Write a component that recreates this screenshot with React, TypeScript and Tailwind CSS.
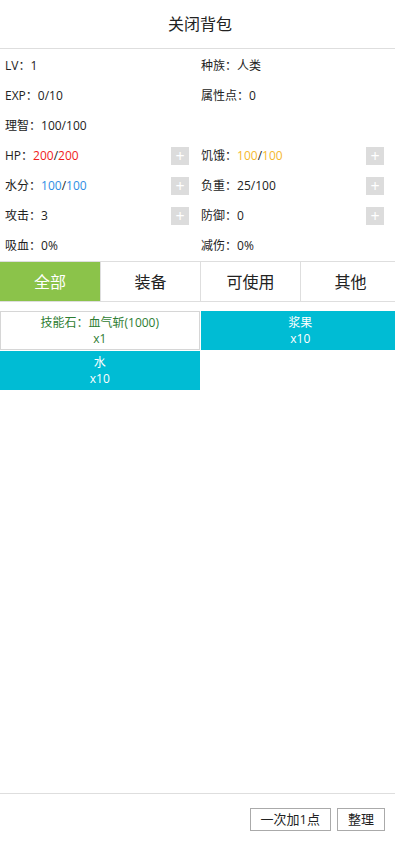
import React from "react";

type Stat = {
  label: string;
  value: React.ReactNode;
  plus?: boolean;
};

const leftStats: Stat[] = [
  { label: "LV", value: "1" },
  { label: "EXP", value: "0/10" },
  { label: "理智", value: "100/100" },
  {
    label: "HP",
    value: (
      <>
        <span className="text-[#f01d1d]">200</span>/<span className="text-[#f01d1d]">200</span>
      </>
    ),
    plus: true,
  },
  {
    label: "水分",
    value: (
      <>
        <span className="text-[#2f8de4]">100</span>/<span className="text-[#2f8de4]">100</span>
      </>
    ),
    plus: true,
  },
  { label: "攻击", value: "3", plus: true },
  { label: "吸血", value: "0%" },
];

const rightStats: Stat[] = [
  { label: "种族", value: "人类" },
  { label: "属性点", value: "0" },
  { label: "", value: "" },
  {
    label: "饥饿",
    value: (
      <>
        <span className="text-[#f5b82e]">100</span>/<span className="text-[#f5b82e]">100</span>
      </>
    ),
    plus: true,
  },
  { label: "负重", value: "25/100", plus: true },
  { label: "防御", value: "0", plus: true },
  { label: "减伤", value: "0%" },
];

function StatCell({ stat, right }: { stat: Stat; right?: boolean }) {
  return (
    <div
      className={
        right
          ? "flex h-[30px] items-center justify-between pl-[1px] pr-[16px]"
          : "flex h-[30px] items-center justify-between pl-[5px] pr-[11px]"
      }
    >
      <span>
        {stat.label && (
          <>
            {stat.label}：{stat.value}
          </>
        )}
      </span>
      {stat.plus && (
        <span className="flex h-[18px] w-[18px] items-center justify-center bg-[#dcdcdc] text-[16px] leading-none text-white">
          +
        </span>
      )}
    </div>
  );
}

const tabs = ["全部", "装备", "可使用", "其他"];

export default function App() {
  return (
    <div className="w-full overflow-hidden bg-white">
      <div
        className="flex min-h-[841px] w-[400px] flex-col text-[#222]"
        style={{ fontFamily: '"Open Sans", "Noto Sans CJK SC", sans-serif' }}
      >
        {/* Header */}
        <div className="flex h-[49px] items-center justify-center border-b border-[#dedede] text-[16px]">
          关闭背包
        </div>

        {/* Stats */}
        <div className="grid grid-cols-2 pt-[2px] text-[12px]">
          {leftStats.map((s, i) => (
            <React.Fragment key={i}>
              <StatCell stat={s} />
              <StatCell stat={rightStats[i]} right />
            </React.Fragment>
          ))}
        </div>

        {/* Tabs */}
        <div className="grid grid-cols-4 border-y border-[#dedede] text-[16px]">
          {tabs.map((t, i) => (
            <div
              key={t}
              className={
                i === 0
                  ? "flex h-[39px] items-center justify-center bg-[#8bc34a] text-white"
                  : "flex h-[39px] items-center justify-center border-l border-[#dedede]"
              }
            >
              {t}
            </div>
          ))}
        </div>

        {/* Items */}
        <div className="mt-[9px] grid grid-cols-2 gap-[1px] text-[12px] leading-[16px]">
          <div className="flex h-[39px] flex-col items-center justify-center border border-[#d6d6d6] text-[#2e7d32]">
            <span>技能石：血气斩(1000)</span>
            <span>x1</span>
          </div>
          <div className="flex h-[39px] flex-col items-center justify-center bg-[#00bcd4] text-white">
            <span>浆果</span>
            <span>x10</span>
          </div>
          <div className="flex h-[39px] flex-col items-center justify-center bg-[#00bcd4] text-white">
            <span>水</span>
            <span>x10</span>
          </div>
        </div>

        <div className="flex-1" />

        {/* Footer */}
        <div className="flex h-[48px] items-center justify-end gap-[6px] border-t border-[#dedede] pr-[15px] pt-[4px] text-[13px]">
          <button className="h-[23px] border border-[#aaa] px-[10px] leading-none">一次加1点</button>
          <button className="h-[23px] border border-[#aaa] px-[10px] leading-none">整理</button>
        </div>
      </div>
    </div>
  );
}
